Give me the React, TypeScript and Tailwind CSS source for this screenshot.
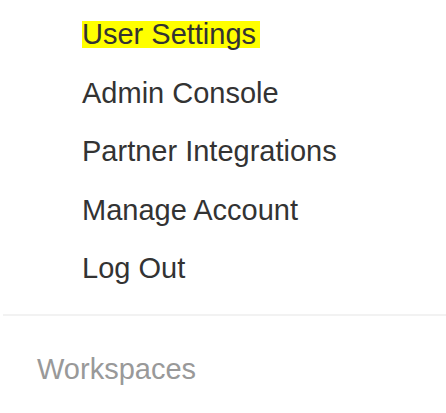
import React from "react";

export default function App() {
  const items = ["Admin Console", "Partner Integrations", "Manage Account", "Log Out"];
  return (
    <div
      className="w-[446px] h-[413px] bg-white overflow-hidden text-[29px] text-[#333333]"
      style={{ fontFamily: '"Liberation Sans", Arial, sans-serif' }}
    >
      <ul className="pt-[5px] pl-[82px]">
        <li className="leading-[58.6px]">
          <span className="inline-block h-[27px] leading-[27px] bg-[#ffff00] pr-[4px]">User Settings</span>
        </li>
        {items.map((t) => (
          <li key={t} className="leading-[58.6px]">
            {t}
          </li>
        ))}
      </ul>
      <div className="mt-[16px] ml-[3px] h-[2px] bg-[#f2f2f2]" />
      <div className="mt-[24px] pl-[37px] leading-[58.6px] text-[#999999]">Workspaces</div>
    </div>
  );
}
